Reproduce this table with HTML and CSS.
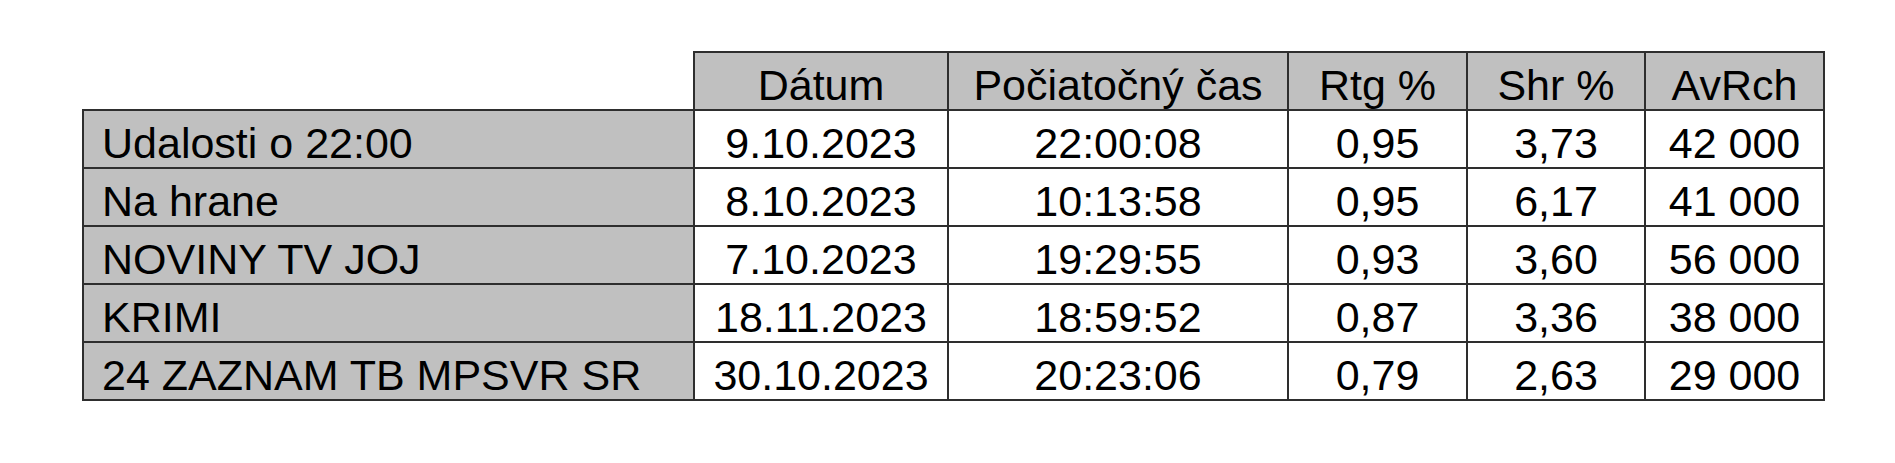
FILE: index.html
```html
<!DOCTYPE html>
<html>
<head>
<meta charset="utf-8">
<link rel="stylesheet" href="styles.css">
</head>
<body>
<table class="ratings">
  <colgroup>
    <col class="c-name"><col class="c-date"><col class="c-time"><col class="c-num"><col class="c-num2"><col class="c-num">
  </colgroup>
  <thead>
    <tr>
      <th class="blank"></th>
      <th>Dátum</th>
      <th>Počiatočný čas</th>
      <th>Rtg %</th>
      <th>Shr %</th>
      <th>AvRch</th>
    </tr>
  </thead>
  <tbody>
    <tr><th class="name">Udalosti o 22:00</th><td>9.10.2023</td><td>22:00:08</td><td>0,95</td><td>3,73</td><td>42 000</td></tr>
    <tr><th class="name">Na hrane</th><td>8.10.2023</td><td>10:13:58</td><td>0,95</td><td>6,17</td><td>41 000</td></tr>
    <tr><th class="name">NOVINY TV JOJ</th><td>7.10.2023</td><td>19:29:55</td><td>0,93</td><td>3,60</td><td>56 000</td></tr>
    <tr><th class="name">KRIMI</th><td>18.11.2023</td><td>18:59:52</td><td>0,87</td><td>3,36</td><td>38 000</td></tr>
    <tr><th class="name">24 ZAZNAM TB MPSVR SR</th><td>30.10.2023</td><td>20:23:06</td><td>0,79</td><td>2,63</td><td>29 000</td></tr>
  </tbody>
</table>
</body>
</html>
```

FILE: styles.css
```css
html, body {
  margin: 0;
  padding: 0;
  background: #ffffff;
}
body {
  padding: 51px 0 0 82px;
  font-family: "Liberation Sans", Arial, sans-serif;
  color: #000000;
}
.ratings {
  border-collapse: collapse;
  table-layout: fixed;
  width: 1741px;
  font-size: 43px;
}
.c-name { width: 611px; }
.c-date { width: 254px; }
.c-time { width: 340px; }
.c-num { width: 179px; }
.c-num2 { width: 178px; }
.ratings th,
.ratings td {
  border: 2px solid #2e2e2e;
  height: 58px;
  box-sizing: border-box;
  padding: 8px 0 0 0;
  font-weight: normal;
  text-align: center;
  vertical-align: middle;
  line-height: 44px;
  white-space: nowrap;
}
.ratings thead th {
  background: #c0c0c0;
}
.ratings thead th.blank {
  background: #ffffff;
  border: none;
}
.ratings th.name {
  background: #c0c0c0;
  text-align: left;
  padding-left: 18px;
}
.ratings td {
  background: #ffffff;
}
```
